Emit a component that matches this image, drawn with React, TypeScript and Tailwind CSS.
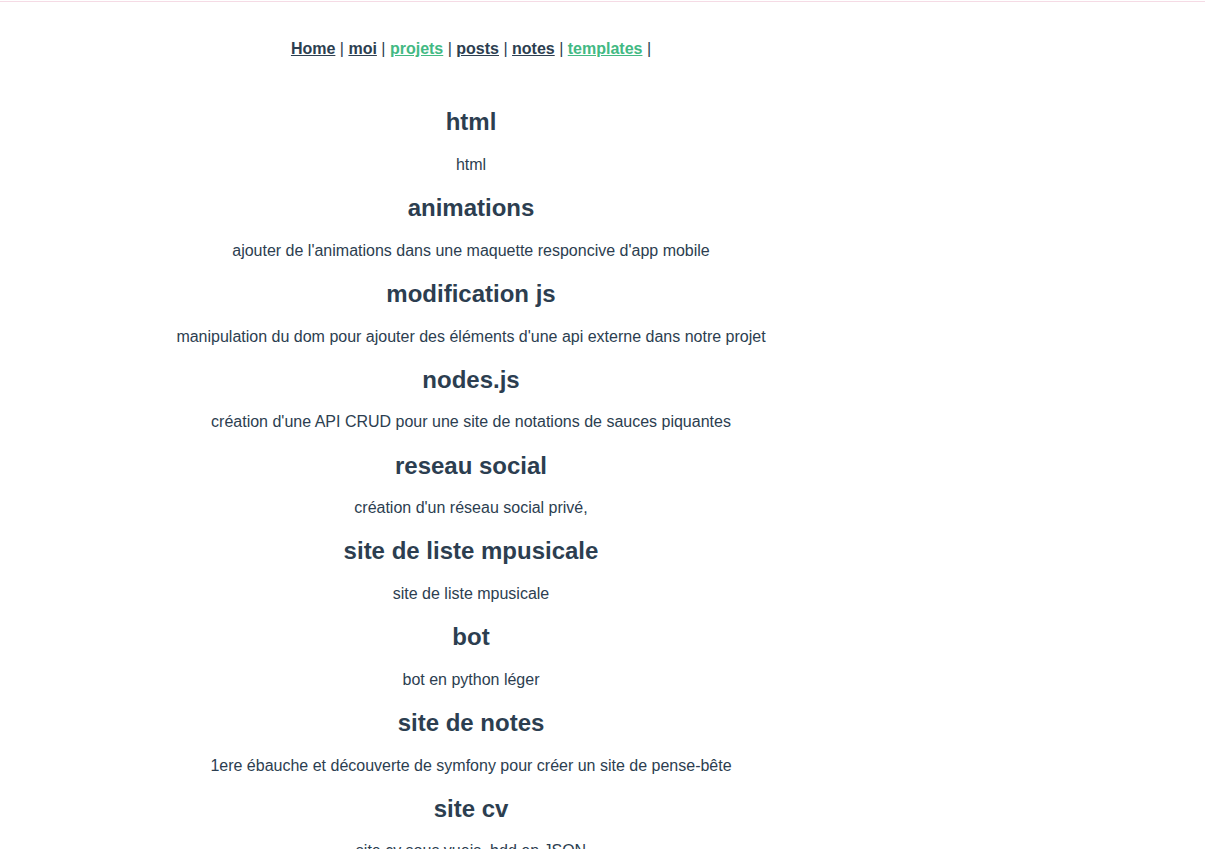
//External Imports
import { Fragment } from "react";

//Setup the Project List
const projects = [
	{ title: "html", description: "html" },
	{ title: "animations", description: "ajouter de l'animations dans une maquette responcive d'app mobile" },
	{
		title: "modification js",
		description: "manipulation du dom pour ajouter des éléments d'une api externe dans notre projet",
	},
	{ title: "nodes.js", description: "création d'une API CRUD pour une site de notations de sauces piquantes" },
	{ title: "reseau social", description: "création d'un réseau social privé," },
	{ title: "site de liste mpusicale", description: "site de liste mpusicale" },
	{ title: "bot", description: "bot en python léger" },
	{ title: "site de notes", description: "1ere ébauche et découverte de symfony pour créer un site de pense-bête" },
	{ title: "site cv", description: "site cv sous vuejs, bdd en JSON" },
];

//Setup the Nav Links
const links = [
	{ label: "Home", active: false },
	{ label: "moi", active: false },
	{ label: "projets", active: true },
	{ label: "posts", active: false },
	{ label: "notes", active: false },
	{ label: "templates", active: true },
];

//Setup the Page
export default function App() {
	//Return the Page's Content
	return (
		<div className="min-h-screen bg-white pt-px text-[#2c3e50] font-['Liberation_Sans',Arial,sans-serif]">
			{/*Setup the Top Line*/}
			<div className="h-px bg-[#f5dbe5]" />

			{/*Setup the Main Column*/}
			<div className="w-[942px] flex flex-col items-center text-center">
				{/*Setup the Navbar*/}
				<nav className="pt-[38px] text-[16px] leading-[18.4px] font-bold">
					{links.map(link => (
						<Fragment key={link.label}>
							<a
								href="#"
								className={link.active ? "underline text-[#42b983]" : "underline text-[#2c3e50]"}
							>
								{link.label}
							</a>
							<span className="font-normal"> | </span>
						</Fragment>
					))}
				</nav>

				{/*Setup the Project List*/}
				<div className="mt-[50px] flex flex-col items-center gap-[19.92px]">
					{projects.map(project => (
						<Fragment key={project.title}>
							<h2 className="text-[24px] leading-[27.6px] font-bold">{project.title}</h2>
							<p className="text-[16px] leading-[18.4px]">{project.description}</p>
						</Fragment>
					))}
				</div>
			</div>
		</div>
	);
}
